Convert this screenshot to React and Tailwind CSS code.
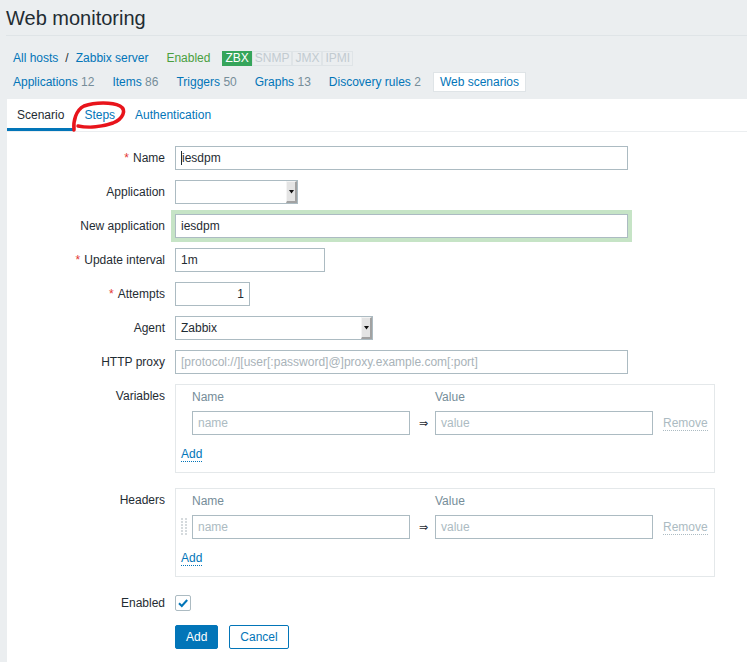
import React from "react";

const Req = () => <span className="text-[#e33734] mr-[4px]">*</span>;

const Label = ({ children, top }) => (
  <div
    className={`w-[158px] shrink-0 text-right leading-[14px] ${top ? "self-start pt-[5px]" : ""}`}
  >
    {children}
  </div>
);

const Field = ({ w, children, className = "" }) => (
  <div
    className={`h-[24px] border border-[#acbbc2] bg-white px-[5px] flex items-center ${w} ${className}`}
  >
    {children}
  </div>
);

const Select = ({ w, value }) => (
  <div className={`h-[24px] border border-[#acbbc2] bg-white flex items-stretch ${w}`}>
    <div className="flex-1 px-[5px] flex items-center">{value}</div>
    <div className="w-[11px] bg-[#e4e4e4] border-l border-t border-[#f4f4f4] border-r-2 border-b-2 border-r-[#a2a2a2] border-b-[#a2a2a2] flex items-center justify-center">
      <svg width="5" height="4" viewBox="0 0 5 4">
        <path d="M0 0 H5 L2.5 3.5 Z" fill="#111" />
      </svg>
    </div>
  </div>
);

const Grip = () => (
  <svg width="6" height="18" viewBox="0 0 6 18">
    {[0, 3, 6, 9, 12, 15].map((y) => (
      <g key={y} fill="#d5dadd">
        <rect x="0" y={y} width="2" height="2" />
        <rect x="4" y={y} width="2" height="2" />
      </g>
    ))}
  </svg>
);

const PairTable = ({ grip }) => (
  <div className="w-[540px] h-[89px] border border-[#e4e8ea] pl-[5px] pt-[5px]">
    <div className="flex leading-[14px] text-[#768d99]">
      <div className="w-[11px]" />
      <div className="w-[218px]">Name</div>
      <div className="w-[25px]" />
      <div className="w-[218px]">Value</div>
    </div>
    <div className="flex items-center mt-[7px]">
      <div className="w-[11px] flex items-center">{grip && <Grip />}</div>
      <Field w="w-[218px]">
        <span className="text-[#acbbc2]">name</span>
      </Field>
      <div className="w-[25px] pl-[9px] text-[11px]">⇒</div>
      <Field w="w-[218px]">
        <span className="text-[#acbbc2]">value</span>
      </Field>
      <span className="ml-[10px] leading-[14px] text-[#acbbc2] border-b border-dotted border-[#acbbc2]">
        Remove
      </span>
    </div>
    <div className="mt-[12px] flex">
      <span className="leading-[14px] text-[#0275b8] border-b border-dotted border-[#0275b8]">
        Add
      </span>
    </div>
  </div>
);

const Badge = ({ children, on }) => (
  <span
    className={`h-[15px] px-[2px] leading-[13px] border text-[12px] ${
      on
        ? "bg-[#36a55b] border-[#36a55b] text-white"
        : "bg-[#ebeef0] border-[#dfe4e7] text-[#c2cbd0]"
    }`}
  >
    {children}
  </span>
);

export default function App() {
  return (
    <div className="relative w-[747px] h-[662px] overflow-hidden bg-[#ebeef0] flex flex-col font-['Liberation_Sans',Arial,sans-serif] text-[12px] text-[#1f2c33]">
      {/* Title */}
      <div className="h-[36px] ml-[6px] border-b border-[#dfe4e7] flex items-center">
        <h1 className="text-[20px] leading-[24px]">Web monitoring</h1>
      </div>

      {/* Breadcrumbs */}
      <div className="mt-[12px] h-[20px] pl-[13px] flex items-center">
        <span className="text-[#0275b8]">All hosts</span>
        <span className="mx-[7px]">/</span>
        <span className="text-[#0275b8]">Zabbix server</span>
        <span className="ml-[18px] text-[#4a9f3f]">Enabled</span>
        <div className="ml-[12px] flex">
          <Badge on>ZBX</Badge>
          <Badge>SNMP</Badge>
          <Badge>JMX</Badge>
          <Badge>IPMI</Badge>
        </div>
      </div>

      {/* Host nav */}
      <div className="mt-[4px] h-[20px] pl-[7px] flex items-center gap-[6px]">
        {[
          ["Applications", "12"],
          ["Items", "86"],
          ["Triggers", "50"],
          ["Graphs", "13"],
          ["Discovery rules", "2"],
        ].map(([t, n]) => (
          <span key={t} className="px-[6px] text-[#0275b8]">
            {t} <span className="text-[#768d99]">{n}</span>
          </span>
        ))}
        <span className="h-[20px] px-[6px] flex items-center bg-white border border-[#dfe4e7] text-[#0275b8]">
          Web scenarios
        </span>
      </div>

      {/* Panel */}
      <div className="mt-[7px] ml-[7px] flex-1 bg-white">
        {/* Tabs */}
        <div className="flex h-[33px] border-b border-[#ebeef0]">
          <div className="px-[10px] flex items-center border-b-[3px] border-[#0275b8] pt-[3px]">
            Scenario
          </div>
          <div className="px-[10px] flex items-center text-[#0275b8]">Steps</div>
          <div className="px-[10px] flex items-center text-[#0275b8]">Authentication</div>
        </div>

        {/* Form */}
        <div className="pt-[14px] flex flex-col gap-[10px]">
          <div className="flex items-center gap-[10px]">
            <Label>
              <Req />
              Name
            </Label>
            <Field w="w-[453px]" className="border-[#0e64a3]">
              <span className="w-px h-[14px] bg-[#1f2c33]" />
              <span>iesdpm</span>
            </Field>
          </div>

          <div className="flex items-center gap-[10px]">
            <Label>Application</Label>
            <Select w="w-[123px]" value="" />
          </div>

          <div className="flex items-center gap-[10px]">
            <Label>New application</Label>
            <div className="ring-4 ring-[#c6e4c6]">
              <Field w="w-[453px]" className="border-[#aab6bc]">
                iesdpm
              </Field>
            </div>
          </div>

          <div className="flex items-center gap-[10px]">
            <Label>
              <Req />
              Update interval
            </Label>
            <Field w="w-[150px]">1m</Field>
          </div>

          <div className="flex items-center gap-[10px]">
            <Label>
              <Req />
              Attempts
            </Label>
            <Field w="w-[75px]" className="justify-end">
              1
            </Field>
          </div>

          <div className="flex items-center gap-[10px]">
            <Label>Agent</Label>
            <Select w="w-[198px]" value="Zabbix" />
          </div>

          <div className="flex items-center gap-[10px]">
            <Label>HTTP proxy</Label>
            <Field w="w-[453px]">
              <span className="text-[#a9b3b9]">
                [protocol://][user[:password]@]proxy.example.com[:port]
              </span>
            </Field>
          </div>

          <div className="flex gap-[10px] mb-[5px]">
            <Label top>Variables</Label>
            <PairTable />
          </div>

          <div className="flex gap-[10px] mb-[4px]">
            <Label top>Headers</Label>
            <PairTable grip />
          </div>

          <div className="flex items-center gap-[10px] h-[24px]">
            <Label>Enabled</Label>
            <div className="w-[16px] h-[16px] border border-[#acbbc2] rounded-[2px] flex items-center justify-center">
              <svg width="12" height="12" viewBox="0 0 12 12">
                <path d="M2 6.2 L4.8 9 L10.2 3" fill="none" stroke="#0275b8" strokeWidth="2" />
              </svg>
            </div>
          </div>

          <div className="flex items-center gap-[10px]">
            <div className="w-[158px] shrink-0" />
            <div className="flex gap-[11px]">
              <button className="h-[24px] px-[10px] border border-[#0275b8] bg-[#0275b8] text-white rounded-[2px]">
                Add
              </button>
              <button className="h-[24px] px-[10px] border border-[#0275b8] bg-white text-[#0275b8] rounded-[2px]">
                Cancel
              </button>
            </div>
          </div>
        </div>
      </div>

      {/* red annotation around "Steps" */}
      <svg
        className="absolute left-0 top-0 pointer-events-none"
        width="747"
        height="662"
        viewBox="0 0 747 662"
      >
        <path
          d="M74 130 C 73 121, 76 110, 84 106 C 95 102, 112 102, 120 106 C 127 110, 123 119, 113 123 C 102 127, 88 128, 78 126"
          fill="none"
          stroke="#e8141b"
          strokeWidth="3.5"
          strokeLinecap="round"
        />
      </svg>
    </div>
  );
}
